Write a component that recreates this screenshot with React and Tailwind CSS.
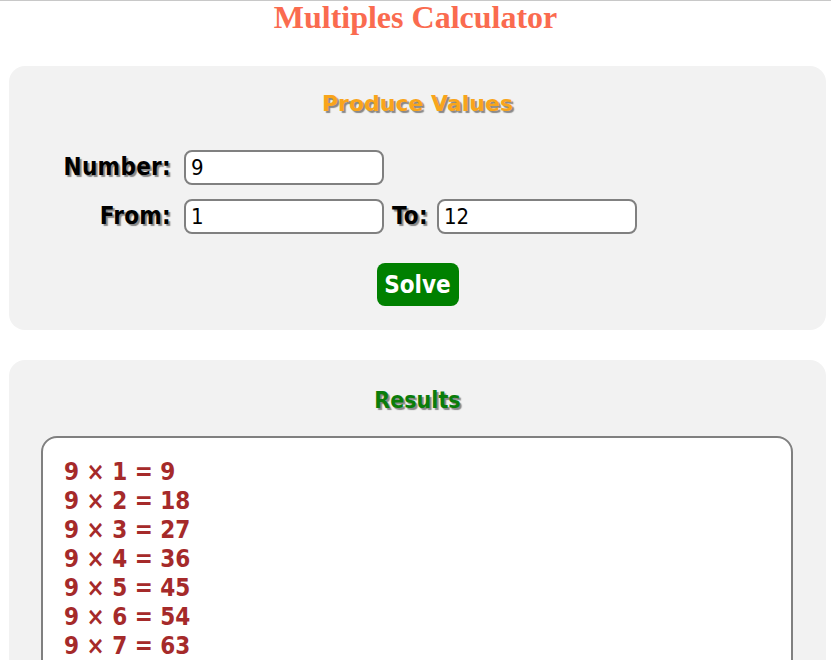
import { useState } from 'react'

const label = "text-[24px] font-bold text-black [text-shadow:2px_2px_1px_#888] font-['DejaVu_Sans_Condensed','DejaVu_Sans',sans-serif] tracking-[0.3px]"
const field = "h-[35px] w-[200px] rounded-[8px] border-2 border-[#808080] bg-white px-[5px] text-[22px] text-black font-['DejaVu_Sans_Condensed','DejaVu_Sans',sans-serif] outline-none"

function build(n, a, b) {
    const out = []
    const x = Number(n), lo = Number(a), hi = Number(b)
    for (let i = lo; i <= hi; i++) out.push(`${x} × ${i} = ${x * i}`)
    return out
}

export default function App() {
    const [num, setNum] = useState('9')
    const [from, setFrom] = useState('1')
    const [to, setTo] = useState('12')
    const [rows, setRows] = useState(() => build('9', '1', '12'))

    return (
        <div className="min-h-[660px] border-t border-[#c8c8c8] bg-white">
            {/* Title */}
            <h1 className="text-center text-[32px] font-bold leading-[33px] text-[#fa6b4f] font-['Liberation_Serif',serif]">
                Multiples Calculator
            </h1>

            {/* Input panel */}
            <div className="ml-[9px] mr-[5px] mt-[32px] h-[264px] rounded-[16px] bg-[#f2f2f2] pt-[24px]">
                <h2 className="text-center text-[22px] font-bold leading-[28px] text-[#f9a51b] [text-shadow:2px_2px_1px_#888] font-['DejaVu_Sans',sans-serif]">
                    Produce Values
                </h2>

                <div className="mt-[31px] flex items-center">
                    <span className={`w-[162px] text-right ${label}`}>Number:</span>
                    <input className={`ml-[13px] ${field}`} value={num} onChange={e => setNum(e.target.value)} />
                </div>
                <div className="mt-[13px] flex items-center">
                    <span className={`w-[162px] text-right ${label}`}>From:</span>
                    <input className={`ml-[13px] ${field}`} value={from} onChange={e => setFrom(e.target.value)} />
                    <span className={`ml-[8px] mr-[9px] ${label}`}>To:</span>
                    <input className={field} value={to} onChange={e => setTo(e.target.value)} />
                </div>

                <div className="mt-[29px] flex justify-center">
                    <button
                        onClick={() => setRows(build(num, from, to))}
                        className="h-[43px] w-[82px] rounded-[8px] bg-[#008000] text-[24px] font-bold text-white font-['DejaVu_Sans_Condensed','DejaVu_Sans',sans-serif]"
                    >
                        Solve
                    </button>
                </div>
            </div>

            {/* Results panel */}
            <div className="ml-[9px] mr-[5px] mt-[30px] rounded-[16px] bg-[#f2f2f2] pt-[26px] pb-[30px]">
                <h2 className="text-center text-[23px] font-bold leading-[28px] text-[#0a7d0a] [text-shadow:2px_2px_1px_#888] font-['DejaVu_Sans_Condensed','DejaVu_Sans',sans-serif]">
                    Results
                </h2>
                <div className="ml-[32px] mr-[33px] mt-[22px] rounded-[16px] border-2 border-[#808080] bg-white px-[21px] pt-[20px] pb-[16px]">
                    {rows.map(r => (
                        <div key={r} className="text-[24px] font-bold leading-[29px] text-[#a52a2a] font-['DejaVu_Sans_Condensed','DejaVu_Sans',sans-serif]">
                            {r}
                        </div>
                    ))}
                </div>
            </div>
        </div>
    )
}
